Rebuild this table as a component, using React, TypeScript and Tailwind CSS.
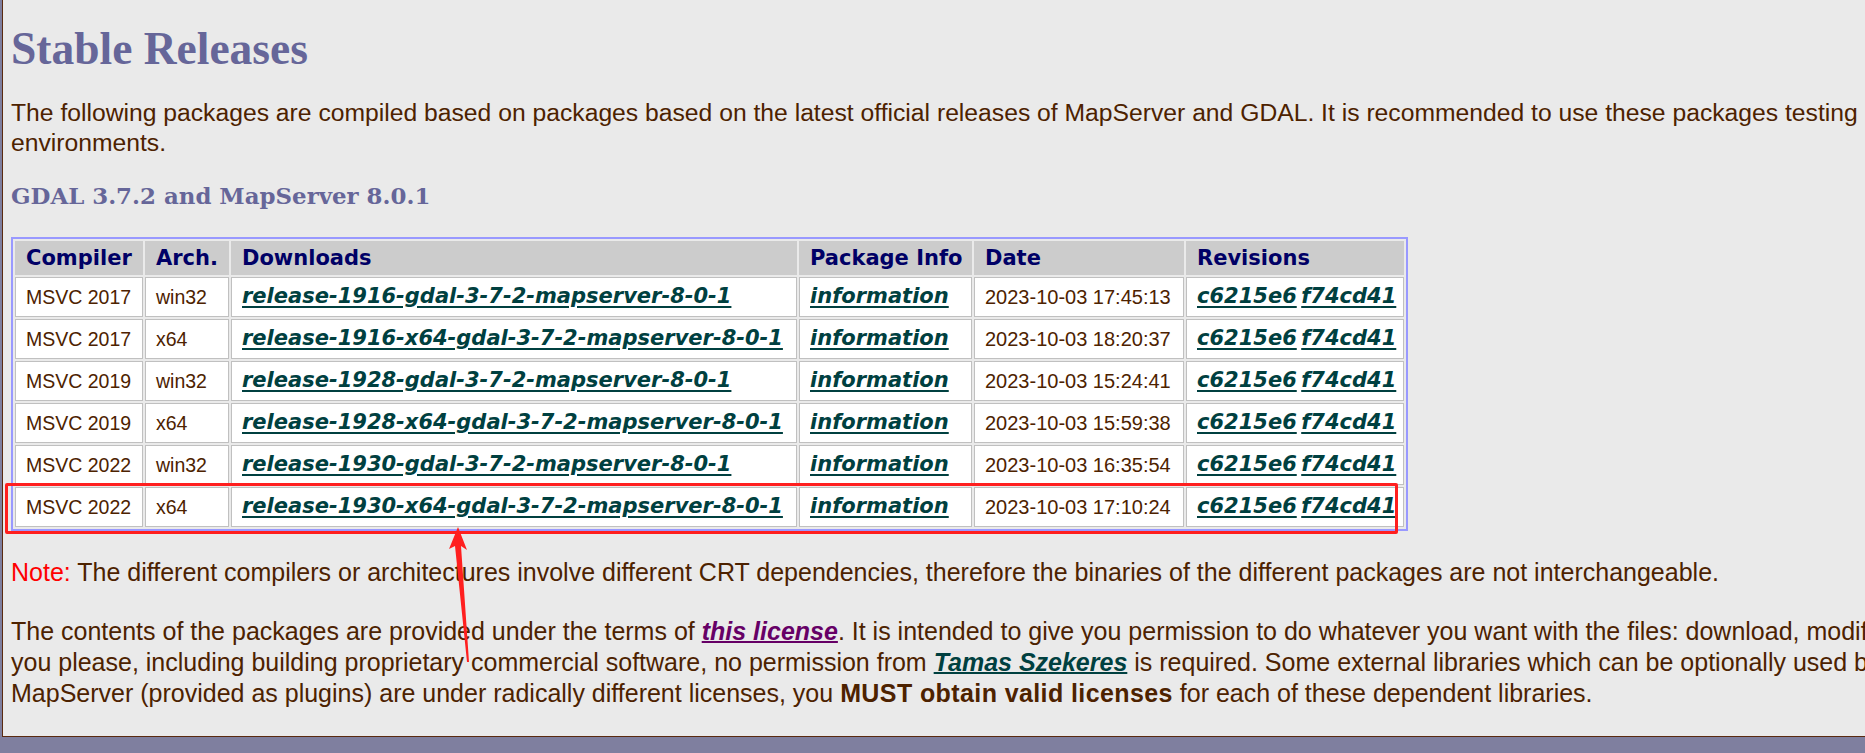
const rows = [
  ['MSVC 2017', 'win32', 'release-1916-gdal-3-7-2-mapserver-8-0-1', '2023-10-03 17:45:13'],
  ['MSVC 2017', 'x64', 'release-1916-x64-gdal-3-7-2-mapserver-8-0-1', '2023-10-03 18:20:37'],
  ['MSVC 2019', 'win32', 'release-1928-gdal-3-7-2-mapserver-8-0-1', '2023-10-03 15:24:41'],
  ['MSVC 2019', 'x64', 'release-1928-x64-gdal-3-7-2-mapserver-8-0-1', '2023-10-03 15:59:38'],
  ['MSVC 2022', 'win32', 'release-1930-gdal-3-7-2-mapserver-8-0-1', '2023-10-03 16:35:54'],
  ['MSVC 2022', 'x64', 'release-1930-x64-gdal-3-7-2-mapserver-8-0-1', '2023-10-03 17:10:24'],
];

const headers = [
  { label: 'Compiler', w: 'w-[128px]' },
  { label: 'Arch.', w: 'w-[84px]' },
  { label: 'Downloads', w: 'w-[566px]' },
  { label: 'Package Info', w: 'w-[173px]' },
  { label: 'Date', w: 'w-[210px]' },
  { label: 'Revisions', w: 'w-[218px]' },
];

const serif = "font-['Liberation_Serif',serif]";
const sans = "font-['Liberation_Sans',Arial,sans-serif]";
const link =
  "font-['DejaVu_Sans',Verdana,sans-serif] font-bold italic text-[21px] text-[#004040] underline decoration-[2px] underline-offset-[3px]";
const cell = 'h-[40px] px-[10px] bg-white border border-[#c0c0c0] leading-[24px] whitespace-nowrap';

function ReleaseTable() {
  return (
    <table className="table-fixed w-[1397px] border-separate border-spacing-[2px] border-2 border-[#9999ff]">
      <thead>
        <tr>
          {headers.map((h) => (
            <th
              key={h.label}
              className={`${h.w} h-[34px] px-[10px] text-left bg-[#cccccc] border border-[#cccccc] font-['DejaVu_Sans',Verdana,sans-serif] font-bold text-[21px] leading-[24px] text-[#000066] whitespace-nowrap`}
            >
              {h.label}
            </th>
          ))}
        </tr>
      </thead>
      <tbody>
        {rows.map((r) => (
          <tr key={r[2]}>
            <td className={`${cell} ${sans} text-[19.5px]`}>{r[0]}</td>
            <td className={`${cell} ${sans} text-[19.5px]`}>{r[1]}</td>
            <td className={cell}>
              <a href="#" className={link}>{r[2]}</a>
            </td>
            <td className={cell}>
              <a href="#" className={link}>information</a>
            </td>
            <td className={`${cell} ${sans} text-[20px]`}>{r[3]}</td>
            <td className={`${cell} pr-[2px]`}>
              <a href="#" className={link}>c6215e6</a> <a href="#" className={link}>f74cd41</a>
            </td>
          </tr>
        ))}
      </tbody>
    </table>
  );
}

export default function App() {
  return (
    <div className="relative w-full h-[753px] overflow-hidden bg-[#7f7f9f]">
      <div className={`ml-[2px] h-[737px] border-l border-b border-[#5a2a10] bg-[#eaeaea] pl-[8px] pt-[23px] ${sans} text-[#4d2200]`}>
        <h1 className={`${serif} font-bold text-[45.5px] leading-[52px] text-[#666699]`}>Stable Releases</h1>

        <p className="mt-[22.5px] text-[24.7px] leading-[30px] whitespace-nowrap">
          The following packages are compiled based on packages based on the latest official releases of MapServer and GDAL. It is recommended to use these packages testing
          <br />
          environments.
        </p>

        <h2 className="mt-[23px] font-['DejaVu_Serif',Georgia,serif] font-bold text-[22.9px] leading-[30px] text-[#666699]">
          GDAL 3.7.2 and MapServer 8.0.1
        </h2>

        <div className="mt-[26px]">
          <ReleaseTable />
        </div>

        <p className="mt-[26.5px] text-[25px] leading-[30px] whitespace-nowrap">
          <span className="text-[#ff0000]">Note:</span> The different compilers or architectures involve different CRT dependencies, therefore the binaries of the different packages are not interchangeable.
        </p>

        <p className="mt-[28.5px] text-[25px] leading-[31px] whitespace-nowrap">
          The contents of the packages are provided under the terms of{' '}
          <a href="#" className="font-bold italic text-[#660066] underline decoration-[2px]">this license</a>. It is intended to give you permission to do whatever you want with the files: download, modify, redistribute
          <br />
          you please, including building proprietary commercial software, no permission from{' '}
          <a href="#" className="font-bold italic text-[#004040] underline decoration-[2px]">Tamas Szekeres</a> is required. Some external libraries which can be optionally used by the
          <br />
          MapServer (provided as plugins) are under radically different licenses, you{' '}
          <b className="font-bold tracking-[0.4px]">MUST obtain valid licenses</b> for each of these dependent libraries.
        </p>
      </div>

      {/* annotation: red box around the last row */}
      <div className="absolute left-[5px] top-[483px] w-[1393px] h-[51px] border-[3px] border-[#ff1f1f] rounded-[2px]" />

      {/* annotation: arrow pointing up at the link */}
      <svg className="absolute left-[440px] top-[520px]" width="40" height="150" viewBox="0 0 40 150">
        <polygon points="18,7 27,30 21,26 29,142 27,142 15,26 9,29" fill="#ff1f1f" />
      </svg>
    </div>
  );
}
